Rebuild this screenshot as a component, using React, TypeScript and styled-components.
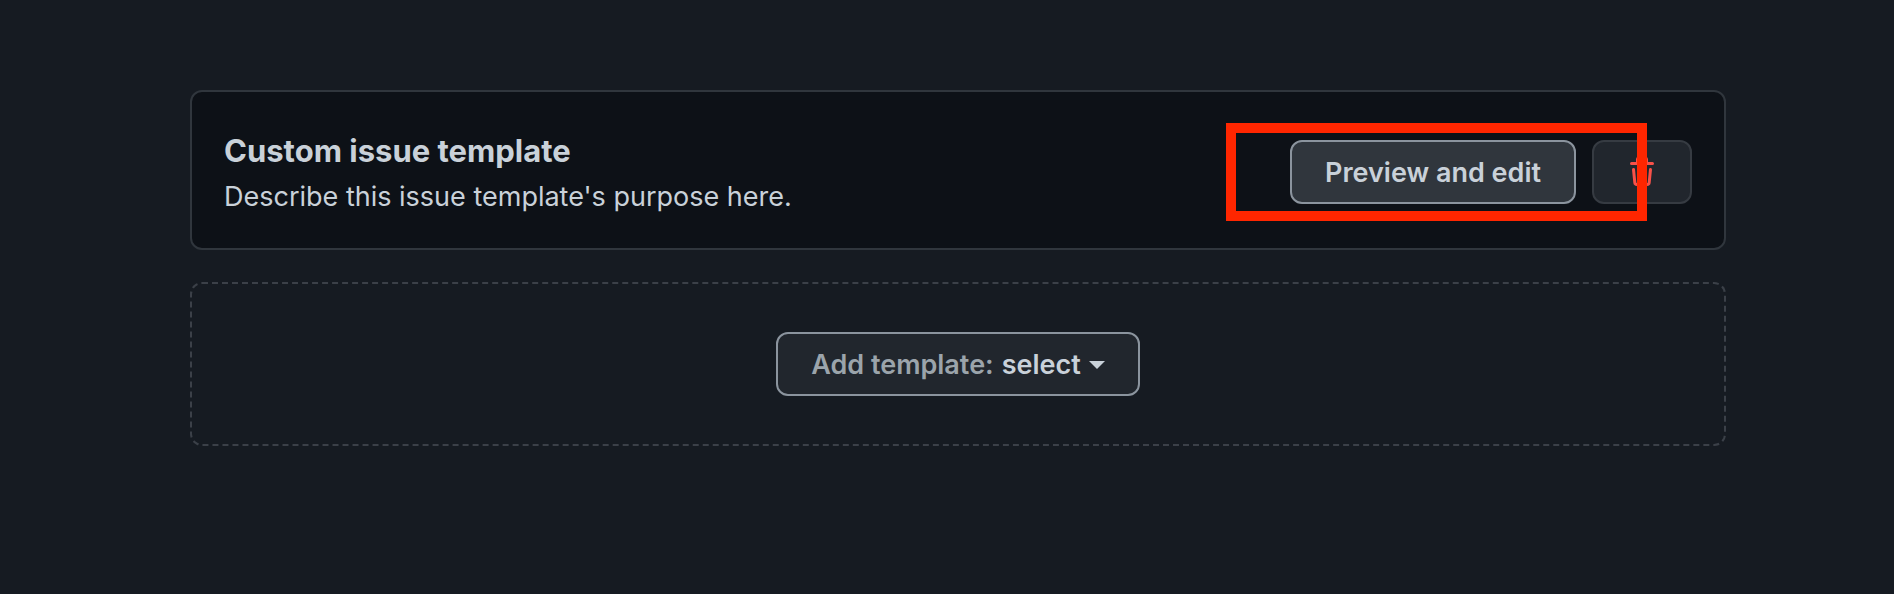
import React from "react";
import styled, { createGlobalStyle, css } from "styled-components";

const GlobalStyle = createGlobalStyle`
  *, *::before, *::after { box-sizing: border-box; }
  body {
    margin: 0;
    background: #161b22;
    color: #c9d1d9;
    font-family: Inter, "Liberation Sans", sans-serif;
    font-size: 27px;
    line-height: 42px;
  }
`;

const Page = styled.main`
  display: flex;
  flex-direction: column;
  gap: 32px;
  padding: 90px 168px 90px 190px;
`;

const Card = styled.section`
  display: flex;
  align-items: center;
  justify-content: space-between;
  gap: 32px;
  padding: 34px 32px 30px;
  background: #0d1117;
  border: 2px solid #30363d;
  border-radius: 12px;
`;

const Details = styled.div`
  min-width: 0;
`;

const Title = styled.h3`
  margin: 0;
  font-size: 31px;
  line-height: 50px;
  font-weight: 700;
`;

const Description = styled.p`
  margin: 0;
`;

const Actions = styled.div`
  position: relative;
  display: flex;
  flex-shrink: 0;
  gap: 16px;
`;

const Highlight = styled.div`
  position: absolute;
  inset: -17px 45px -17px -64px;
  border: 10px solid #ff2600;
  pointer-events: none;
`;

type Variant = "default" | "active" | "danger";

const variants = {
  default: css`
    background: #21262d;
    border-color: #8b949e;
    color: #c9d1d9;
  `,
  active: css`
    background: #30363d;
    border-color: #8b949e;
    color: #c9d1d9;
  `,
  danger: css`
    padding: 0 32px;
    background: #21262d;
    border-color: #363b42;
    color: #f85149;
  `,
};

const Button = styled.button<{ $variant?: Variant }>`
  display: inline-flex;
  align-items: center;
  justify-content: center;
  height: 64px;
  padding: 2px 33px 0;
  border: 2px solid;
  border-radius: 12px;
  font: inherit;
  font-weight: 600;
  white-space: nowrap;
  cursor: pointer;
  ${({ $variant = "default" }) => variants[$variant]}
`;

const AddArea = styled.section`
  display: flex;
  justify-content: center;
  padding: 48px 32px;
  border: 2px dashed #3b4048;
  border-radius: 12px;
`;

const Muted = styled.span`
  color: #9ba4ab;
  margin-right: 8px;
`;

const Caret = styled.span`
  margin-left: 8px;
  border: 8px solid transparent;
  border-top-color: currentColor;
  border-bottom-width: 0;
`;

const TrashIcon = () => (
  <svg width="32" height="32" viewBox="0 0 16 16" fill="currentColor" aria-hidden="true">
    <path d="M11 1.75V3h2.25a.75.75 0 0 1 0 1.5H2.75a.75.75 0 0 1 0-1.5H5V1.75C5 .784 5.784 0 6.75 0h2.5C10.216 0 11 .784 11 1.75ZM4.496 6.675l.66 6.6a.25.25 0 0 0 .249.225h5.19a.25.25 0 0 0 .249-.225l.66-6.6a.75.75 0 0 1 1.492.149l-.66 6.6A1.748 1.748 0 0 1 10.595 15h-5.19a1.75 1.75 0 0 1-1.741-1.575l-.66-6.6a.75.75 0 1 1 1.492-.15ZM6.5 1.75V3h3V1.75a.25.25 0 0 0-.25-.25h-2.5a.25.25 0 0 0-.25.25Z" />
  </svg>
);

export default function App() {
  return (
    <>
      <GlobalStyle />
      <Page>
        <Card>
          <Details>
            <Title>Custom issue template</Title>
            <Description>Describe this issue template's purpose here.</Description>
          </Details>
          <Actions>
            <Button type="button" $variant="active">Preview and edit</Button>
            <Button type="button" $variant="danger" aria-label="Delete template">
              <TrashIcon />
            </Button>
            <Highlight />
          </Actions>
        </Card>
        <AddArea>
          <Button type="button" aria-haspopup="menu">
            <Muted>Add template:</Muted>
            <span>select</span>
            <Caret />
          </Button>
        </AddArea>
      </Page>
    </>
  );
}
